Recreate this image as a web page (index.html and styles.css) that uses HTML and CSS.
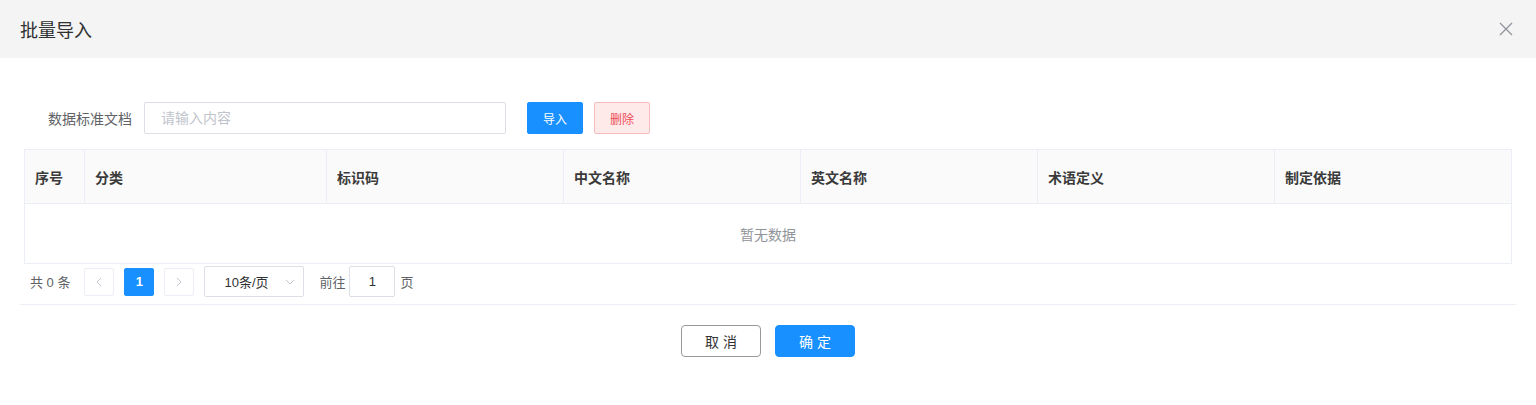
FILE: index.html
```html
<!DOCTYPE html>
<html lang="zh-CN">
<head>
  <meta charset="UTF-8">
  <meta name="viewport" content="width=device-width, initial-scale=1">
  <title>批量导入</title>
  <link rel="stylesheet" href="styles.css">
</head>
<body>
  <div class="dialog">
    <div class="dialog-header">
      <span class="dialog-title">批量导入</span>
      <span class="dialog-close">
        <svg width="14" height="14" viewBox="0 0 14 14"><path d="M1 1 L13 13 M13 1 L1 13" stroke="#909399" stroke-width="1.3" fill="none"/></svg>
      </span>
    </div>

    <div class="dialog-body">
      <div class="form-row">
        <label class="form-label">数据标准文档</label>
        <input class="text-input" type="text" placeholder="请输入内容">
        <button class="btn btn-primary btn-small">导入</button>
        <button class="btn btn-danger-plain btn-small">删除</button>
      </div>

      <div class="table">
        <div class="table-head">
          <div class="cell c-no">序号</div>
          <div class="cell c-wide">分类</div>
          <div class="cell">标识码</div>
          <div class="cell">中文名称</div>
          <div class="cell">英文名称</div>
          <div class="cell">术语定义</div>
          <div class="cell last">制定依据</div>
        </div>
        <div class="table-empty">暂无数据</div>
      </div>

      <div class="pager">
        <span class="pager-total">共 0 条</span>
        <button class="pager-btn">
          <svg width="8" height="10" viewBox="0 0 8 10"><path d="M6 1 L2 5 L6 9" stroke="#c0c4cc" stroke-width="1" fill="none"/></svg>
        </button>
        <button class="pager-num active">1</button>
        <button class="pager-btn">
          <svg width="8" height="10" viewBox="0 0 8 10"><path d="M2 1 L6 5 L2 9" stroke="#c0c4cc" stroke-width="1" fill="none"/></svg>
        </button>
        <div class="pager-size">
          <span>10条/页</span>
          <svg width="10" height="6" viewBox="0 0 10 6"><path d="M1 1 L5 5 L9 1" stroke="#c0c4cc" stroke-width="1" fill="none"/></svg>
        </div>
        <span class="pager-jump">前往</span>
        <input class="pager-input" type="text" value="1">
        <span class="pager-jump">页</span>
      </div>
    </div>

    <div class="dialog-footer">
      <button class="btn btn-default btn-footer">取 消</button>
      <button class="btn btn-primary btn-footer">确 定</button>
    </div>
  </div>
</body>
</html>
```

FILE: styles.css
```css
* { box-sizing: border-box; }
body {
  margin: 0;
  background: #fff;
  font-family: "Liberation Sans", "Noto Sans CJK SC", sans-serif;
  color: #606266;
  font-size: 14px;
}
.dialog { width: 1536px; height: 405px; background: #fff; }
.dialog-header {
  height: 58px; background: #f4f4f4;
  display: flex; align-items: center; justify-content: space-between;
  padding: 0 23px 0 20px;
}
.dialog-title { font-size: 18px; color: #303133; }
.dialog-close { display: flex; }

.dialog-body { padding: 44px 24px 0; }
.form-row { display: flex; align-items: center; height: 32px; margin-bottom: 15px; }
.form-label { width: 120px; padding-right: 12px; text-align: right; color: #606266; font-size: 14px; }
.text-input {
  width: 362px; height: 32px; border: 1px solid #dcdfe6; border-radius: 2px;
  padding: 0 16px; font: inherit; font-size: 14px; color: #606266; outline: none;
}
.text-input::placeholder { color: #c0c4cc; }

.btn { font: inherit; cursor: pointer; border-radius: 2px; }
.btn-small { width: 56px; height: 32px; font-size: 12px; margin-left: 21px; }
.btn-small + .btn-small { margin-left: 11px; }
.btn-primary { background: #1890ff; border: 1px solid #1890ff; color: #fff; }
.btn-danger-plain { background: #ffeaea; border: 1px solid #f8bcbf; color: #ee4c57; }
.btn-default { background: #fff; border: 1px solid #999; color: #333; }

.table { border: 1px solid #ebeef5; }
.table-head { display: flex; height: 54px; background: #fafafa; border-bottom: 1px solid #ebeef5; }
.cell {
  width: 237px; padding-left: 10px; display: flex; align-items: center;
  font-weight: bold; color: #3a3a3a; border-right: 1px solid #ebeef5; font-size: 14px;
}
.cell.c-no { width: 60px; }
.cell.c-wide { width: 242px; }
.cell.last { border-right: none; flex: 1; }
.table-empty { height: 59px; display: flex; align-items: center; justify-content: center; color: #909399; font-size: 14px; }

.pager { display: flex; align-items: center; height: 31px; margin-top: 2px; font-size: 13px; }
.pager-total { margin: 0 14px 0 6px; color: #606266; }
.pager-btn, .pager-num {
  width: 30px; height: 28px; border: 1px solid #ebeef5; background: #fff; border-radius: 2px;
  display: flex; align-items: center; justify-content: center; padding: 0; margin-right: 10px;
}
.pager-num { font: inherit; font-weight: bold; font-size: 13px; }
.pager-num.active { background: #1890ff; border-color: #1890ff; color: #fff; }
.pager-size {
  width: 100px; height: 31px; border: 1px solid #dcdfe6; border-radius: 2px;
  display: flex; align-items: center; justify-content: space-between; padding: 0 8px 0 19px;
  color: #303133; margin-right: 15px;
}
.pager-jump { color: #606266; }
.pager-input {
  width: 46px; height: 31px; border: 1px solid #dcdfe6; border-radius: 2px; margin: 0 5px 0 4px;
  text-align: center; font: inherit; font-size: 13px; color: #303133;
}

.dialog-footer {
  margin: 7px 20px 0; border-top: 1px solid #ebeef5; padding-top: 20px;
  display: flex; justify-content: center; gap: 14px;
}
.btn-footer { width: 80px; height: 32px; font-size: 14px; border-radius: 4px; }
```
